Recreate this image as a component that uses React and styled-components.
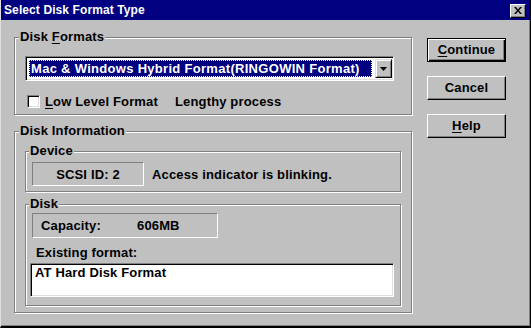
import React from "react";
import styled, { createGlobalStyle } from "styled-components";

const Global = createGlobalStyle`
  html, body { margin: 0; padding: 0; background: #c0c0c0; }
  body { font-family: "Liberation Sans", Arial, sans-serif; }
`;

const Window = styled.div`
  width: 531px;
  height: 328px;
  box-sizing: border-box;
  background: #c0c0c0;
  border-left: 1px solid #dfdfdf;
  border-right: 1px solid #000;
  border-bottom: 2px solid #000;
  box-shadow: inset -1px -1px 0 #808080;
  display: flex;
  flex-direction: column;
  font-family: "Liberation Sans", Arial, sans-serif;
  font-weight: bold;
  font-size: 13px;
  letter-spacing: 0.15px;
  color: #000;
  overflow: hidden;
`;

const TitleBar = styled.div`
  height: 20px;
  background: #000080;
  color: #fff;
  display: flex;
  align-items: center;
  justify-content: space-between;
  padding: 0 4px 0 3px;
  font-size: 12px;
  font-weight: bold;
  letter-spacing: 0.1px;
  flex-shrink: 0;
`;

const CloseBtn = styled.div`
  width: 16px;
  height: 14px;
  box-sizing: border-box;
  background: #c0c0c0;
  border: 1px solid;
  border-color: #fff #000 #000 #fff;
  box-shadow: inset -1px -1px 0 #808080;
  display: flex;
  align-items: center;
  justify-content: center;
  color: #000;
  margin-top: 1px;
`;

const Body = styled.div`
  display: flex;
  padding: 17px 0 0 13px;
  flex: 1;
`;

const LeftCol = styled.div`
  width: 399px;
  display: flex;
  flex-direction: column;
`;

const Group = styled.div`
  border: 1px solid #808080;
  box-shadow: inset 1px 1px 0 #fff, 1px 1px 0 #fff;
  display: flex;
  flex-direction: column;
  margin-top: ${(p) => p.$mt || 0}px;
  margin-right: 1px;
  padding: ${(p) => p.$pad};
`;

const Legend = styled.div`
  align-self: flex-start;
  margin: -9px 0 0 ${(p) => p.$ml || 3}px;
  padding: 0 1px;
  height: 16px;
  line-height: 16px;
  background: #c0c0c0;
  white-space: nowrap;
`;

const U = styled.span`
  text-decoration: underline;
  text-underline-offset: 2px;
`;

const Combo = styled.div`
  margin-top: 11px;
  width: 369px;
  height: 25px;
  box-sizing: border-box;
  background: #fff;
  border: 1px solid;
  border-color: #808080 #fff #fff #808080;
  box-shadow: inset 1px 1px 0 #000, inset -1px -1px 0 #dfdfdf;
  display: flex;
  align-items: stretch;
  padding: 2px 1px 2px 2px;
`;

const ComboSel = styled.div`
  flex: 1;
  margin: 1px 3px 1px 1px;
  background: #000080;
  color: #fff;
  outline: 1px dotted #fff;
  outline-offset: -1px;
  display: flex;
  align-items: center;
  padding-left: 2px;
  white-space: nowrap;
  overflow: hidden;
  letter-spacing: 0.3px;
`;

const DropBtn = styled.div`
  width: 17px;
  box-sizing: border-box;
  background: #c0c0c0;
  border: 1px solid;
  border-color: #dfdfdf #000 #000 #dfdfdf;
  box-shadow: inset 1px 1px 0 #fff, inset -1px -1px 0 #808080;
  display: flex;
  align-items: center;
  justify-content: center;
`;

const CheckRow = styled.div`
  margin-top: 13px;
  height: 15px;
  display: flex;
  align-items: center;
  padding-left: 2px;
`;

const CheckBox = styled.div`
  width: 13px;
  height: 13px;
  box-sizing: border-box;
  background: #fff;
  border: 1px solid;
  border-color: #808080 #fff #fff #808080;
  box-shadow: inset 1px 1px 0 #000, inset -1px -1px 0 #dfdfdf;
  margin-right: 5px;
`;

const CheckLabel = styled.span`
  width: 130px;
  white-space: nowrap;
`;

const InfoRow = styled.div`
  display: flex;
  align-items: center;
  margin-top: ${(p) => p.$mt || 0}px;
`;

const InfoBox = styled.div`
  width: ${(p) => p.$w}px;
  height: ${(p) => p.$h}px;
  box-sizing: border-box;
  margin-left: 2px;
  border: 1px solid;
  border-color: #808080 #fff #fff #808080;
  display: flex;
  align-items: center;
  justify-content: ${(p) => (p.$center ? "center" : "flex-start")};
  padding-left: ${(p) => (p.$center ? 0 : 8)}px;
  white-space: nowrap;
`;

const InfoNote = styled.span`
  margin-left: 8px;
  white-space: nowrap;
`;

const Cell = styled.span`
  width: ${(p) => p.$w}px;
`;

const FieldLabel = styled.div`
  margin-top: 7px;
  padding-left: 6px;
  height: 16px;
  line-height: 16px;
`;

const TextBox = styled.div`
  margin-top: 2px;
  width: 364px;
  height: 34px;
  box-sizing: border-box;
  background: #fff;
  border: 1px solid;
  border-color: #808080 #fff #fff #808080;
  box-shadow: inset 1px 1px 0 #000, inset -1px -1px 0 #dfdfdf;
  padding: 1px 0 0 4px;
  line-height: 16px;
`;

const RightCol = styled.div`
  display: flex;
  flex-direction: column;
  gap: 14px;
  margin-left: 14px;
  padding-top: 1px;
`;

const Button = styled.div`
  width: 79px;
  height: 24px;
  box-sizing: border-box;
  background: #c0c0c0;
  border: 1px solid;
  border-color: ${(p) => (p.$default ? "#000" : "#fff #000 #000 #fff")};
  box-shadow: ${(p) =>
    p.$default
      ? "inset 1px 1px 0 #fff, inset -1px -1px 0 #000, inset -2px -2px 0 #808080"
      : "inset -1px -1px 0 #808080"};
  display: flex;
  align-items: center;
  justify-content: center;
  padding-bottom: 1px;
  font-size: 13px;
`;

export default function App() {
  return (
    <>
      <Global />
      <Window>
        <TitleBar>
          <span>Select Disk Format Type</span>
          <CloseBtn>
            <svg width="8" height="7" viewBox="0 0 8 7">
              <path d="M0 0h2l2 2.5L6 0h2L5 3.5 8 7H6L4 4.5 2 7H0l3-3.5z" fill="#000" />
            </svg>
          </CloseBtn>
        </TitleBar>
        <Body>
          <LeftCol>
            <Group $pad="0 0 5px 10px">
              <Legend $ml={-6}>
                Disk <U>F</U>ormats
              </Legend>
              <Combo>
                <ComboSel>Mac &amp; Windows Hybrid Format(RINGOWIN Format)</ComboSel>
                <DropBtn>
                  <svg width="7" height="4" viewBox="0 0 7 4">
                    <path d="M0 0h7L3.5 4z" fill="#000" />
                  </svg>
                </DropBtn>
              </Combo>
              <CheckRow>
                <CheckBox />
                <CheckLabel>
                  <U>L</U>ow Level Format
                </CheckLabel>
                <span>Lengthy process</span>
              </CheckRow>
            </Group>
            <Group $mt={16} $pad="0 9px 6px 10px">
              <Legend $ml={-6}>Disk Information</Legend>
              <Group $mt={12} $pad="0 0 5px 4px">
                <Legend $ml={-1}>Device</Legend>
                <InfoRow $mt={3}>
                  <InfoBox $w={112} $h={24} $center>
                    SCSI ID: 2
                  </InfoBox>
                  <InfoNote>Access indicator is blinking.</InfoNote>
                </InfoRow>
              </Group>
              <Group $mt={12} $pad="0 0 8px 4px">
                <Legend $ml={-1}>Disk</Legend>
                <InfoRow $mt={1}>
                  <InfoBox $w={186} $h={25}>
                    <Cell $w={96}>Capacity:</Cell>
                    <span>606MB</span>
                  </InfoBox>
                </InfoRow>
                <FieldLabel>Existing format:</FieldLabel>
                <TextBox>AT Hard Disk Format</TextBox>
              </Group>
            </Group>
          </LeftCol>
          <RightCol>
            <Button $default>
              <span>
                <U>C</U>ontinue
              </span>
            </Button>
            <Button>Cancel</Button>
            <Button>
              <span>
                <U>H</U>elp
              </span>
            </Button>
          </RightCol>
        </Body>
      </Window>
    </>
  );
}
